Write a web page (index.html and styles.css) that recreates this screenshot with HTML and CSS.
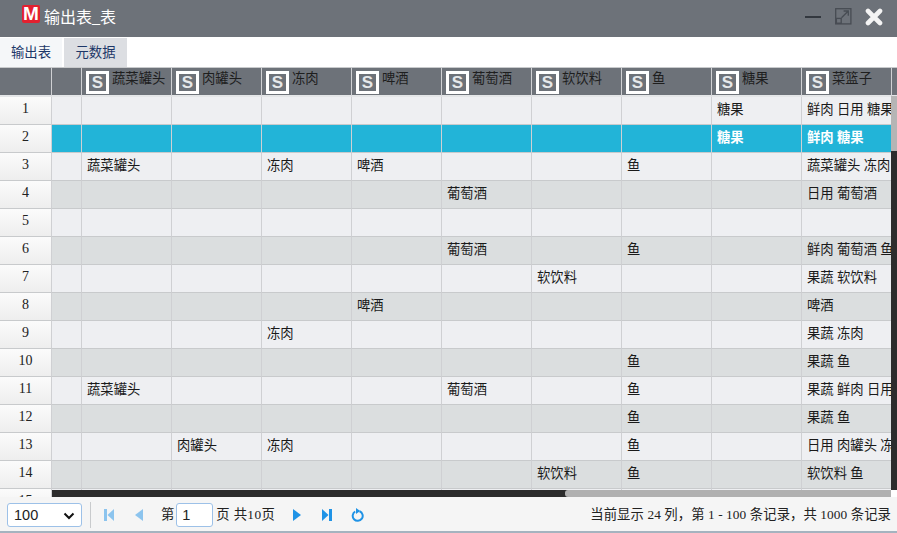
FILE: index.html
```html
<!DOCTYPE html>
<html lang="zh">
<head>
<meta charset="utf-8">
<title>输出表_表</title>
<link rel="stylesheet" href="styles.css">
</head>
<body>
<div class="window">
  <header class="titlebar">
    <span class="logo">M</span>
    <span class="title">输出表_表</span>
    <div class="winbtns">
      <svg class="wb" width="18" height="18" viewBox="0 0 18 18"><rect x="0" y="8" width="16" height="2" fill="#33383f"/></svg>
      <svg class="wb" width="18" height="18" viewBox="0 0 18 18" fill="none" stroke="#474c53" stroke-width="1.3"><rect x="0.7" y="0.7" width="15.2" height="15.2"/><rect x="1.4" y="10.4" width="4.8" height="4.8"/><path d="M6.5 9.8 13 3.3M8.6 3h4.7v4.7"/></svg>
      <svg class="wb" width="18" height="18" viewBox="0 0 18 18"><path d="M3 3 15 15M15 3 3 15" stroke="#f4f4f4" stroke-width="4.6" stroke-linecap="round"/></svg>
    </div>
  </header>
  <nav class="tabs">
    <a class="tab tab-a">输出表</a>
    <a class="tab tab-b">元数据</a>
  </nav>
  <div class="grid">
    <table class="sheet">
      <colgroup><col class="c-num"><col class="c-chk"><col class="c"><col class="c"><col class="c"><col class="c"><col class="c"><col class="c"><col class="c"><col class="c"><col class="c"><col class="c"></colgroup>
      <thead>
        <tr>
          <th></th><th></th>
          <th><span class="hd"><i class="s">S</i>蔬菜罐头</span></th>
          <th><span class="hd"><i class="s">S</i>肉罐头</span></th>
          <th><span class="hd"><i class="s">S</i>冻肉</span></th>
          <th><span class="hd"><i class="s">S</i>啤酒</span></th>
          <th><span class="hd"><i class="s">S</i>葡萄酒</span></th>
          <th><span class="hd"><i class="s">S</i>软饮料</span></th>
          <th><span class="hd"><i class="s">S</i>鱼</span></th>
          <th><span class="hd"><i class="s">S</i>糖果</span></th>
          <th><span class="hd"><i class="s">S</i>菜篮子</span></th>
          <th></th>
        </tr>
      </thead>
      <tbody>
        <tr class="lt"><td class="n">1</td><td></td><td></td><td></td><td></td><td></td><td></td><td></td><td></td><td>糖果</td><td><div class="clip">鲜肉 日用 糖果</div></td><td></td></tr>
        <tr class="sel"><td class="n">2</td><td></td><td></td><td></td><td></td><td></td><td></td><td></td><td></td><td>糖果</td><td><div class="clip">鲜肉 糖果</div></td><td></td></tr>
        <tr class="lt"><td class="n">3</td><td></td><td>蔬菜罐头</td><td></td><td>冻肉</td><td>啤酒</td><td></td><td></td><td>鱼</td><td></td><td><div class="clip">蔬菜罐头 冻肉</div></td><td></td></tr>
        <tr class="dk"><td class="n">4</td><td></td><td></td><td></td><td></td><td></td><td>葡萄酒</td><td></td><td></td><td></td><td><div class="clip">日用 葡萄酒</div></td><td></td></tr>
        <tr class="lt"><td class="n">5</td><td></td><td></td><td></td><td></td><td></td><td></td><td></td><td></td><td></td><td></td><td></td></tr>
        <tr class="dk"><td class="n">6</td><td></td><td></td><td></td><td></td><td></td><td>葡萄酒</td><td></td><td>鱼</td><td></td><td><div class="clip">鲜肉 葡萄酒 鱼</div></td><td></td></tr>
        <tr class="lt"><td class="n">7</td><td></td><td></td><td></td><td></td><td></td><td></td><td>软饮料</td><td></td><td></td><td><div class="clip">果蔬 软饮料</div></td><td></td></tr>
        <tr class="dk"><td class="n">8</td><td></td><td></td><td></td><td></td><td>啤酒</td><td></td><td></td><td></td><td></td><td><div class="clip">啤酒</div></td><td></td></tr>
        <tr class="lt"><td class="n">9</td><td></td><td></td><td></td><td>冻肉</td><td></td><td></td><td></td><td></td><td></td><td><div class="clip">果蔬 冻肉</div></td><td></td></tr>
        <tr class="dk"><td class="n">10</td><td></td><td></td><td></td><td></td><td></td><td></td><td></td><td>鱼</td><td></td><td><div class="clip">果蔬 鱼</div></td><td></td></tr>
        <tr class="lt"><td class="n">11</td><td></td><td>蔬菜罐头</td><td></td><td></td><td></td><td>葡萄酒</td><td></td><td>鱼</td><td></td><td><div class="clip">果蔬 鲜肉 日用</div></td><td></td></tr>
        <tr class="dk"><td class="n">12</td><td></td><td></td><td></td><td></td><td></td><td></td><td></td><td>鱼</td><td></td><td><div class="clip">果蔬 鱼</div></td><td></td></tr>
        <tr class="lt"><td class="n">13</td><td></td><td></td><td>肉罐头</td><td>冻肉</td><td></td><td></td><td></td><td>鱼</td><td></td><td><div class="clip">日用 肉罐头 冻肉</div></td><td></td></tr>
        <tr class="dk"><td class="n">14</td><td></td><td></td><td></td><td></td><td></td><td></td><td>软饮料</td><td>鱼</td><td></td><td><div class="clip">软饮料 鱼</div></td><td></td></tr>
        <tr class="lt"><td class="n">15</td><td></td><td></td><td></td><td></td><td></td><td></td><td></td><td></td><td></td><td></td><td></td></tr>
      </tbody>
    </table>
    <div class="hbar"><div class="hthumb"></div></div>
    <div class="vbar"><div class="vthumb"></div></div>
    <div class="corner"></div>
  </div>
  <footer class="pager">
    <div class="size-wrap">
      <select class="size"><option>100</option></select>
      <svg class="chev" width="12" height="8" viewBox="0 0 12 8" fill="none"><path d="M1.5 1.5 6 6l4.5-4.5" stroke="#111" stroke-width="2"/></svg>
    </div>
    <span class="sep"></span>
    <button class="pb"><svg width="10" height="12" viewBox="0 0 10 12"><rect x="0" y="0" width="3" height="12" fill="#8cc4ee"/><path d="M10 0v12L3.5 6z" fill="#8cc4ee"/></svg></button>
    <button class="pb"><svg width="8" height="12" viewBox="0 0 8 12"><path d="M8 0v12L0 6z" fill="#8cc4ee"/></svg></button>
    <span class="lbl lbl-a">第</span>
    <input class="page" value="1">
    <span class="lbl lbl-b">页 共10页</span>
    <button class="pb pb-next"><svg width="8" height="12" viewBox="0 0 8 12"><path d="M0 0v12L8 6z" fill="#1f93e6"/></svg></button>
    <button class="pb"><svg width="10" height="12" viewBox="0 0 10 12"><path d="M0 0v12L6.5 6z" fill="#1f93e6"/><rect x="7" y="0" width="3" height="12" fill="#1f93e6"/></svg></button>
    <button class="pb"><svg width="13" height="14" viewBox="0 0 13 14" fill="none"><path d="M4.2 3.5A5 5 0 1 0 8.6 3.2" stroke="#1f93e6" stroke-width="2"/><path d="M5 0v6L9.2 3z" fill="#1f93e6"/></svg></button>
    <span class="info">当前显示 24 列，第 1 - 100 条记录，共 1000 条记录</span>
  </footer>
</div>
</body>
</html>
```
FILE: styles.css
```css
* { box-sizing: border-box; }
html, body { margin: 0; padding: 0; height: 100%; overflow: hidden; background: #fff; }
body { font-family: "Liberation Serif", "Noto Sans CJK SC", serif; font-size: 13.33px; color: #222; }
.window { display: flex; flex-direction: column; width: 897px; height: 533px; }

.titlebar { flex: 0 0 37px; display: flex; align-items: center; background: #6d7279; padding: 0 14px 0 22px; }
.logo { width: 18px; height: 18px; margin-top: -9px; border-radius: 2px; background: #e3202f; color: #fff; font: 700 19px/18px "Liberation Sans", sans-serif; text-align: center; }
.title { margin-left: 4px; margin-top: -2px; font-size: 16px; line-height: 20px; color: #fff; }
.winbtns { margin-left: auto; margin-top: -3px; display: flex; gap: 12px; }
.wb { display: block; }

.tabs { flex: 0 0 30px; display: flex; background: #fff; padding-top: 1px; }
.tab { height: 29px; line-height: 29px; text-align: center; color: #1d3768; }
.tab-a { width: 62px; background: #f5f7f9; }
.tab-b { width: 63px; margin-left: 2px; background: #dcdee2; }

.grid { position: relative; flex: 0 0 430px; overflow: hidden; }
.sheet { table-layout: fixed; border-collapse: separate; border-spacing: 0; width: 982px; }
.c-num { width: 52px; }
.c-chk { width: 30px; }
.c { width: 90px; }
.sheet th { height: 30px; padding: 0; background: #6d7279; border-top: 1px solid #c8cacc; border-right: 1px solid #cfd0d3; border-bottom: 2px solid #e4e6e8; font-weight: 400; text-align: left; vertical-align: top; }
.hd { display: flex; align-items: flex-start; gap: 3px; padding: 3px 0 0 4px; color: #1e1e1e; line-height: 15px; white-space: nowrap; }
.s { flex: 0 0 23px; height: 23px; border: 3px solid #fff; background: #6d7279; color: #e6e8ea; font: 700 17px/17px "Liberation Sans", sans-serif; text-align: center; }
.sheet td { height: 28px; padding: 0 0 5px 5px; border-right: 1px solid #cfd0d3; border-bottom: 1px solid #c8cacc; color: #1a1a1a; white-space: nowrap; overflow: hidden; }
.clip { overflow: hidden; white-space: nowrap; }
.lt td { background: #eeeff2; }
.dk td { background: #dbdedf; }
.sel td { background: #22b4d8; color: #fff; font-weight: 700; }
.sheet td.n { padding: 0 0 3px; text-align: center; font-weight: 400; font-size: 14px; color: #222; background: linear-gradient(#fbfbfb, #eeeeee); }

.hbar { position: absolute; left: 52px; top: 423px; width: 839px; height: 7px; background: #2c2c2c; }
.hthumb { position: absolute; left: 513px; right: 0; top: 0; bottom: 0; border-radius: 3px 0 0 3px; background: #b0b0b0; }
.vbar { position: absolute; left: 891px; top: 29px; width: 6px; height: 394px; background: #2c2c2c; }
.vthumb { height: 55px; background: #b5b5b5; }
.corner { position: absolute; left: 891px; top: 423px; width: 6px; height: 7px; background: #fff; }

.pager { flex: 0 0 36px; display: flex; align-items: flex-start; padding: 6px 6px 0 7px; background: #f5f5f5; border-bottom: 2px solid #a5b3bf; }
.size-wrap { position: relative; width: 75px; height: 24px; }
.size { appearance: none; display: block; width: 75px; height: 24px; padding-left: 6px; border: 1px solid #9dc1e8; border-radius: 3px; background: #fff; color: #222; font: 14.5px "Liberation Sans", sans-serif; }
.chev { position: absolute; left: 56px; top: 9px; }
.sep { width: 1px; height: 26px; margin: -1px 3px 0 8px; background: #c9cbcd; }
.pb { flex: 0 0 30px; height: 24px; padding: 0; border: 0; background: none; display: flex; align-items: center; justify-content: center; }
.pb-next { margin-left: 7px; }
.lbl { line-height: 24px; }
.lbl-a { margin-left: 7px; }
.lbl-b { margin-left: 3px; letter-spacing: 0.35px; }
.page { width: 37px; height: 24px; margin-left: 2px; padding: 0 0 0 5px; border: 1px solid #9dc1e8; border-radius: 3px; background: #fff; color: #222; font: 14.5px "Liberation Sans", sans-serif; }
.info { margin-left: auto; line-height: 24px; white-space: nowrap; letter-spacing: 0.09px; }
```
